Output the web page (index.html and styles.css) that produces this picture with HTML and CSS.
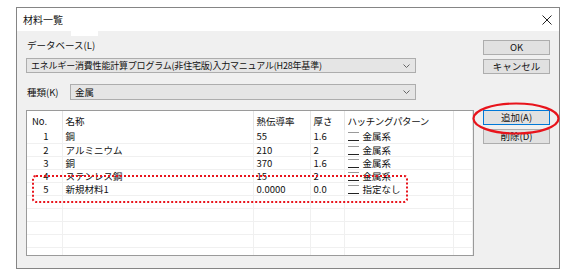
FILE: index.html
```html
<!DOCTYPE html>
<html lang="ja">
<head>
  <meta charset="UTF-8" />
  <title>材料一覧</title>
  <link rel="stylesheet" href="styles.css">
</head>
<body>

  <!-- Dialog window -->
  <div class="dialog">
    <div class="titlebar">
      <span class="title">材料一覧</span>
      <svg class="close" width="10" height="10" viewBox="0 0 10 10">
        <path d="M0.5 0.5 L9.5 9.5 M9.5 0.5 L0.5 9.5" stroke="#222" stroke-width="1" fill="none" />
      </svg>
    </div>
    <div class="patch"></div>

    <div class="content">
      <div class="main">
        <div class="label db-label">データベース(L)</div>
        <div class="combo combo-db">
          <span class="db-text">エネルギー消費性能計算プログラム(非住宅版)入力マニュアル(H28年基準)</span>
          <svg class="arrow" width="7" height="4" viewBox="0 0 7 4"><path d="M0.5 0.5 L3.5 3.5 L6.5 0.5" stroke="#666" fill="none" /></svg>
        </div>

        <div class="kind-row">
          <span class="label">種類(K)</span>
          <div class="combo combo-kind">
            <span>金属</span>
            <svg class="arrow" width="7" height="4" viewBox="0 0 7 4"><path d="M0.5 0.5 L3.5 3.5 L6.5 0.5" stroke="#666" fill="none" /></svg>
          </div>
        </div>

        <!-- Material list -->
        <div class="list">
          <table>
            <colgroup>
              <col class="c-no"><col class="c-name"><col class="c-k"><col class="c-t"><col class="c-hatch"><col>
            </colgroup>
            <thead>
              <tr><th class="no-head">No.</th><th>名称</th><th>熱伝導率</th><th>厚さ</th><th class="hatch-head">ハッチングパターン</th><th></th></tr>
            </thead>
            <tbody>
              <tr><td class="no">1</td><td>鋼</td><td>55</td><td>1.6</td><td><span class="hatch"></span>金属系</td><td></td></tr>
              <tr><td class="no">2</td><td>アルミニウム</td><td>210</td><td>2</td><td><span class="hatch"></span>金属系</td><td></td></tr>
              <tr><td class="no">3</td><td>銅</td><td>370</td><td>1.6</td><td><span class="hatch"></span>金属系</td><td></td></tr>
              <tr><td class="no">4</td><td>ステンレス鋼</td><td>15</td><td>2</td><td><span class="hatch"></span>金属系</td><td></td></tr>
              <tr><td class="no">5</td><td>新規材料1</td><td>0.0000</td><td>0.0</td><td><span class="hatch"></span>指定なし</td><td></td></tr>
              <tr><td></td><td></td><td></td><td></td><td></td><td></td></tr>
              <tr><td></td><td></td><td></td><td></td><td></td><td></td></tr>
              <tr><td></td><td></td><td></td><td></td><td></td><td></td></tr>
              <tr><td></td><td></td><td></td><td></td><td></td><td></td></tr>
              <tr><td></td><td></td><td></td><td></td><td></td><td></td></tr>
            </tbody>
          </table>
        </div>
      </div>

      <div class="buttons">
        <button class="btn btn-ok">OK</button>
        <button class="btn">キャンセル</button>
        <button class="btn btn-add">追加(A)</button>
        <button class="btn">削除(D)</button>
      </div>
    </div>

    <!-- Red annotation marks -->
    <div class="mark-rows"></div>
    <svg class="mark-add" width="88" height="33" viewBox="0 0 88 33">
      <ellipse cx="44" cy="16.5" rx="42.5" ry="15" stroke="#e8141c" stroke-width="2.2" fill="none" />
    </svg>
  </div>

</body>
</html>
```

FILE: styles.css
```css
* { box-sizing: border-box; }

body {
  margin: 0;
  background-color: white;
  font-family: "Noto Sans CJK JP", "Noto Sans", sans-serif;
  font-size: 9.5px;
  color: #111;
}

.dialog {
  position: relative;
  margin: 7px 0 0 16px;
  width: 544px;
  height: 262px;
  border: 1px solid #858585;
  background-color: #f0f0f0;
}

.titlebar {
  height: 23px;
  background-color: white;
  display: flex;
  align-items: center;
  justify-content: space-between;
  padding: 0 6px 0 6px;
}

.title {
  font-size: 10px;
}

.close {
  margin-right: 1px;
}

.patch {
  position: absolute;
  left: 54px;
  top: 23px;
  width: 27px;
  height: 5px;
  background-color: white;
}

.content {
  display: flex;
  padding: 8px 0 0 9px;
}

.main {
  width: 448px;
  display: flex;
  flex-direction: column;
}

.label {
  height: 12px;
  line-height: 12px;
  padding-left: 1px;
}

.combo {
  display: flex;
  align-items: center;
  justify-content: space-between;
  background-color: #e5e5e5;
  border: 1px solid #adadad;
  padding: 0 5px 0 4px;
  line-height: 13px;
}

.db-text {
  font-size: 9px;
  letter-spacing: -0.2px;
}

.combo-db {
  margin-top: 7px;
  width: 390px;
  height: 15px;
}

.kind-row {
  margin-top: 11px;
  display: flex;
  align-items: center;
}

.kind-row .label {
  width: 44px;
}

.combo-kind {
  width: 346px;
  height: 16px;
}

.list {
  margin-top: 10px;
  height: 146px;
  border: 1px solid #9a9a9a;
  background-color: white;
  overflow: hidden;
}

table {
  width: 446px;
  table-layout: fixed;
  border-collapse: collapse;
}

.c-no { width: 35px; }
.c-name { width: 191px; }
.c-k { width: 57px; }
.c-t { width: 34px; }
.c-hatch { width: 109px; }

th {
  height: 19px;
  font-weight: normal;
  text-align: left;
  padding: 0 0 0 3px;
  border-right: 1px solid #e5e5e5;
  white-space: nowrap;
  overflow: hidden;
}

th.no-head {
  padding-left: 5px;
}

th.hatch-head {
  letter-spacing: -0.4px;
}

td {
  height: 13px;
  line-height: 12px;
  padding: 0 0 0 3px;
  border-right: 1px solid #f0f0f0;
  border-bottom: 1px solid #f0f0f0;
  white-space: nowrap;
  overflow: hidden;
}

td.no {
  text-align: right;
  padding-right: 13px;
}

.hatch {
  display: inline-block;
  width: 11px;
  height: 9px;
  border-top: 1px solid #9a9a9a;
  border-bottom: 1px solid #222;
  margin-right: 4px;
  vertical-align: -1px;
}

.buttons {
  margin-left: 9px;
  width: 67px;
  display: flex;
  flex-direction: column;
}

.btn {
  height: 15px;
  padding: 0;
  font-family: inherit;
  font-size: 9.5px;
  line-height: 13px;
  color: #111;
  background-color: #e1e1e1;
  border: 1px solid #adadad;
  margin-top: 4px;
}

.btn-ok {
  margin-top: 1px;
}

.btn-add {
  margin-top: 36px;
  border-color: #0078d7;
}

.mark-rows {
  position: absolute;
  left: 15px;
  top: 167px;
  width: 376px;
  height: 28px;
  border: 2.2px dotted #e8141c;
  border-radius: 4px;
}

.mark-add {
  position: absolute;
  left: 455px;
  top: 94px;
}
```
